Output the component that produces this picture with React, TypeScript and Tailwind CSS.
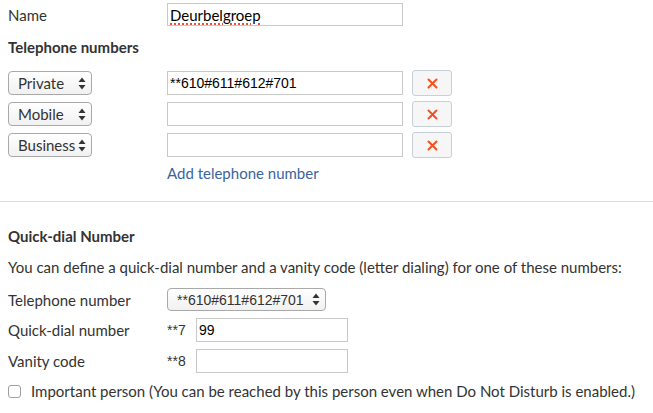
const labelFont = "font-['Lato','Noto_Sans',sans-serif]";
const fieldFont = "font-['Liberation_Sans',Arial,sans-serif]";

const Arrows = () => (
  <svg width="8" height="13" viewBox="0 0 8 13" className="shrink-0">
    <path d="M4 0.5 L7.5 5 L0.5 5 Z" fill="#333" />
    <path d="M4 12.5 L7.5 8 L0.5 8 Z" fill="#333" />
  </svg>
);

const Select = ({ label, className }: { label: string; className?: string }) => (
  <div
    className={`flex items-center justify-between rounded-[4px] border border-[#a9a9a9] bg-gradient-to-b from-[#ffffff] to-[#f1f1f1] pl-[9px] pr-[5px] ${className ?? ""}`}
  >
    <span>{label}</span>
    <Arrows />
  </div>
);

const Input = ({ value, className }: { value?: string; className?: string }) => (
  <div
    className={`flex items-center border border-[#c9c9c9] bg-white pl-[2px] text-[14px] text-black ${fieldFont} ${className ?? ""}`}
  >
    {value}
  </div>
);

const RemoveButton = () => (
  <button className="flex h-[26px] w-[40px] items-center justify-center rounded-[3px] border border-[#c6d0d8] bg-[#f6f6f6]">
    <svg width="11" height="11" viewBox="0 0 11 11">
      <path d="M1.5 1.5 L9.5 9.5 M9.5 1.5 L1.5 9.5" stroke="#f4511e" strokeWidth="2" strokeLinecap="round" />
    </svg>
  </button>
);

const phones = [
  { type: "Private", number: "**610#611#612#701" },
  { type: "Mobile", number: "" },
  { type: "Business", number: "" },
];

export default function App() {
  return (
    <div className={`h-[413px] w-[653px] bg-white text-[15px] leading-5 text-[#333] ${labelFont}`}>
      <div className="px-2 pt-[3px]">
        <div className="flex items-center">
          <span className="w-[159px]">Name</span>
          <div className="flex h-[23px] w-[236px] items-center border border-[#c9c9c9] pl-[2px] text-black">
            <span className="underline decoration-[#e8503a] decoration-dotted decoration-2 underline-offset-[3px]">
              Deurbelgroep
            </span>
          </div>
        </div>

        <h3 className="mt-[11px] font-bold">Telephone numbers</h3>

        <div className="mt-[13px] flex flex-col gap-[5px]">
          {phones.map(({ type, number }) => (
            <div key={type} className="flex h-[26px] items-center">
              <div className="w-[159px]">
                <Select label={type} className="h-[24px] w-[84px]" />
              </div>
              <Input value={number} className="h-[24px] w-[236px]" />
              <div className="ml-[9px]">
                <RemoveButton />
              </div>
            </div>
          ))}
        </div>

        <a className="ml-[159px] mt-[5px] block text-[#3b64a0]">Add telephone number</a>
      </div>

      <div className="mt-[18px] h-px w-full bg-[#dcdcdc]" />

      <div className="px-2">
        <h3 className="mt-[24px] font-bold">Quick-dial Number</h3>
        <p className="mt-[11px]">
          You can define a quick-dial number and a vanity code (letter dialing) for one of these numbers:
        </p>

        <div className="mt-[11px] flex h-[23px] items-center">
          <span className="w-[159px]">Telephone number</span>
          <Select
            label="**610#611#612#701"
            className={`h-[23px] w-[159px] text-[14px] ${fieldFont}`}
          />
        </div>

        <div className="mt-[7px] flex h-[24px] items-center">
          <span className="w-[159px]">Quick-dial number</span>
          <span className={`w-[29px] text-[14px] ${fieldFont}`}>**7</span>
          <Input value="99" className="h-[24px] w-[152px]" />
        </div>

        <div className="mt-[7px] flex h-[24px] items-center">
          <span className="w-[159px]">Vanity code</span>
          <span className={`w-[29px] text-[14px] ${fieldFont}`}>**8</span>
          <Input className="h-[24px] w-[152px]" />
        </div>

        <label className="mt-[8px] flex items-center">
          <span className="h-[13px] w-[13px] rounded-[3px] border border-[#a0a0a0] bg-white" />
          <span className="ml-[10px]">
            Important person (You can be reached by this person even when Do Not Disturb is enabled.)
          </span>
        </label>
      </div>
    </div>
  );
}
